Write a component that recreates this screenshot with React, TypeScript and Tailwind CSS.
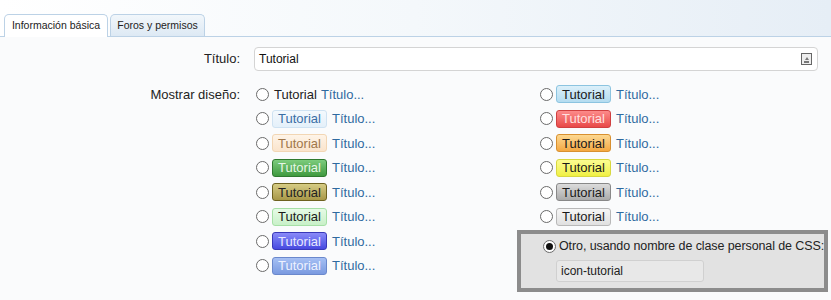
import React from "react";

const leftRows: (string | null)[] = [
  null,
  "bg-gradient-to-b from-[#f4f9fd] to-[#e4f0fa] border-[#cfe2f2] text-[#3a6ea5]",
  "bg-gradient-to-b from-[#fef4e8] to-[#fae4cc] border-[#f2d6b4] text-[#a0774a]",
  "bg-gradient-to-b from-[#7ccc7c] to-[#3f9a3f] border-[#2f7a2f] text-[#e6f6e6]",
  "bg-gradient-to-b from-[#d6cc84] to-[#a89848] border-[#6e6220] text-[#222]",
  "bg-gradient-to-b from-[#e6fbe6] to-[#c8f0c8] border-[#a6e0a6] text-[#1a1a1a]",
  "bg-gradient-to-b from-[#8a8af8] to-[#4848e0] border-[#3838b8] text-[#e8e8ff]",
  "bg-gradient-to-b from-[#a6c0f4] to-[#7a9ae0] border-[#6a88cc] text-[#eef2ff]",
];

const rightRows: string[] = [
  "bg-gradient-to-b from-[#dcf0fa] to-[#b4dcf0] border-[#8cc4e0] text-[#1a1a1a]",
  "bg-gradient-to-b from-[#fc8a8a] to-[#e84848] border-[#d04040] text-[#ffe0e0]",
  "bg-gradient-to-b from-[#fcd890] to-[#f4a840] border-[#d89030] text-[#1a1a1a]",
  "bg-gradient-to-b from-[#fcfc90] to-[#f0f040] border-[#d8d840] text-[#1a1a1a]",
  "bg-gradient-to-b from-[#dcdcdc] to-[#aaaaaa] border-[#888888] text-[#1a1a1a]",
  "bg-gradient-to-b from-[#f6f6f6] to-[#e0e0e0] border-[#b8b8b8] text-[#1a1a1a]",
];

function Radio({ checked = false }: { checked?: boolean }) {
  return (
    <span className="w-[13px] h-[13px] rounded-full border border-[#6a6a6a] bg-white flex items-center justify-center shrink-0">
      {checked && <span className="w-[7px] h-[7px] rounded-full bg-[#111]" />}
    </span>
  );
}

function Row({ badge }: { badge: string | null }) {
  return (
    <div className="h-[24.5px] flex items-center whitespace-nowrap">
      <Radio />
      {badge === null ? (
        <span className="ml-[5px] text-[#222] text-[13px]">Tutorial</span>
      ) : (
        <span
          className={`ml-[3px] h-[18px] w-[55px] flex items-center justify-center rounded-[3px] border text-[13px] leading-none ${badge}`}
        >
          Tutorial
        </span>
      )}
      <span className={`${badge === null ? "ml-[4px]" : "ml-[5px]"} text-[13px] text-[#2f6aa0]`}>Título...</span>
    </div>
  );
}

export default function App() {
  return (
    <div
      className="w-[831px] h-[300px] overflow-hidden bg-[#fafbfc] text-[13px] text-[#222]"
      style={{ fontFamily: '"Liberation Sans", Arial, sans-serif' }}
    >
      {/* Tab bar */}
      <div className="h-[37px] bg-gradient-to-r from-white via-[#f4f8fb] to-[#e6eef6] border-b border-[#bcd2e6] flex items-end pl-[4px] gap-[2px]">
        <div className="h-[23px] w-[104px] flex items-center justify-center bg-white border border-b-0 border-[#bcd2e6] rounded-t-[5px] text-[10.5px] text-[#222] -mb-px relative whitespace-nowrap">
          Información básica
        </div>
        <div className="h-[22px] w-[95px] flex items-center justify-center bg-gradient-to-b from-[#f2f7fb] to-[#dde9f4] border border-b-0 border-[#bcd2e6] rounded-t-[5px] text-[10.5px] text-[#222] whitespace-nowrap">
          Foros y permisos
        </div>
      </div>

      {/* Title row */}
      <div className="flex items-center mt-[10px]">
        <div className="w-[240px] text-right text-[13px]">Título:</div>
        <div className="ml-[14px] w-[564px] h-[24px] rounded-[4px] border border-[#d4d4d4] bg-white flex items-center px-[4px]">
          <span className="text-[12px] text-[#111] flex-1">Tutorial</span>
          <span className="w-[11px] h-[12px] border border-[#666] bg-[#eee] flex flex-col items-center justify-end pb-[1px] mr-[1px]">
            <span className="w-0 h-0 border-l-[2px] border-r-[2px] border-b-[3px] border-l-transparent border-r-transparent border-b-[#777]" />
            <span className="w-[5px] h-[2px] bg-[#777] mt-[1px]" />
          </span>
        </div>
      </div>

      {/* Mostrar diseño */}
      <div className="flex mt-[11px]">
        <div className="w-[240px] text-right text-[13px] h-[24.5px] flex items-center justify-end">
          Mostrar diseño:
        </div>
        <div className="ml-[16px] w-[284px] flex flex-col">
          {leftRows.map((b, i) => (
            <Row key={i} badge={b} />
          ))}
        </div>
        <div className="flex flex-col">
          {rightRows.map((b, i) => (
            <Row key={i} badge={b} />
          ))}
          <div className="-ml-[23px] mt-[1px] w-[311px] h-[62px] border-[4px] border-[#8c8c8c] bg-[#e2e2e2] pl-[22px] pt-[3px]">
            <div className="flex items-center h-[19px] whitespace-nowrap">
              <Radio checked />
              <span className="ml-[3px] text-[12.5px] tracking-[-0.1px] text-[#222]">Otro, usando nombre de clase personal de CSS:</span>
            </div>
            <div className="ml-[13px] mt-[4px] w-[148px] h-[22px] rounded-[3px] border border-[#d0d0d0] bg-[#e8e8e8] flex items-center px-[4px] text-[12px] text-[#222]">
              icon-tutorial
            </div>
          </div>
        </div>
      </div>
    </div>
  );
}
